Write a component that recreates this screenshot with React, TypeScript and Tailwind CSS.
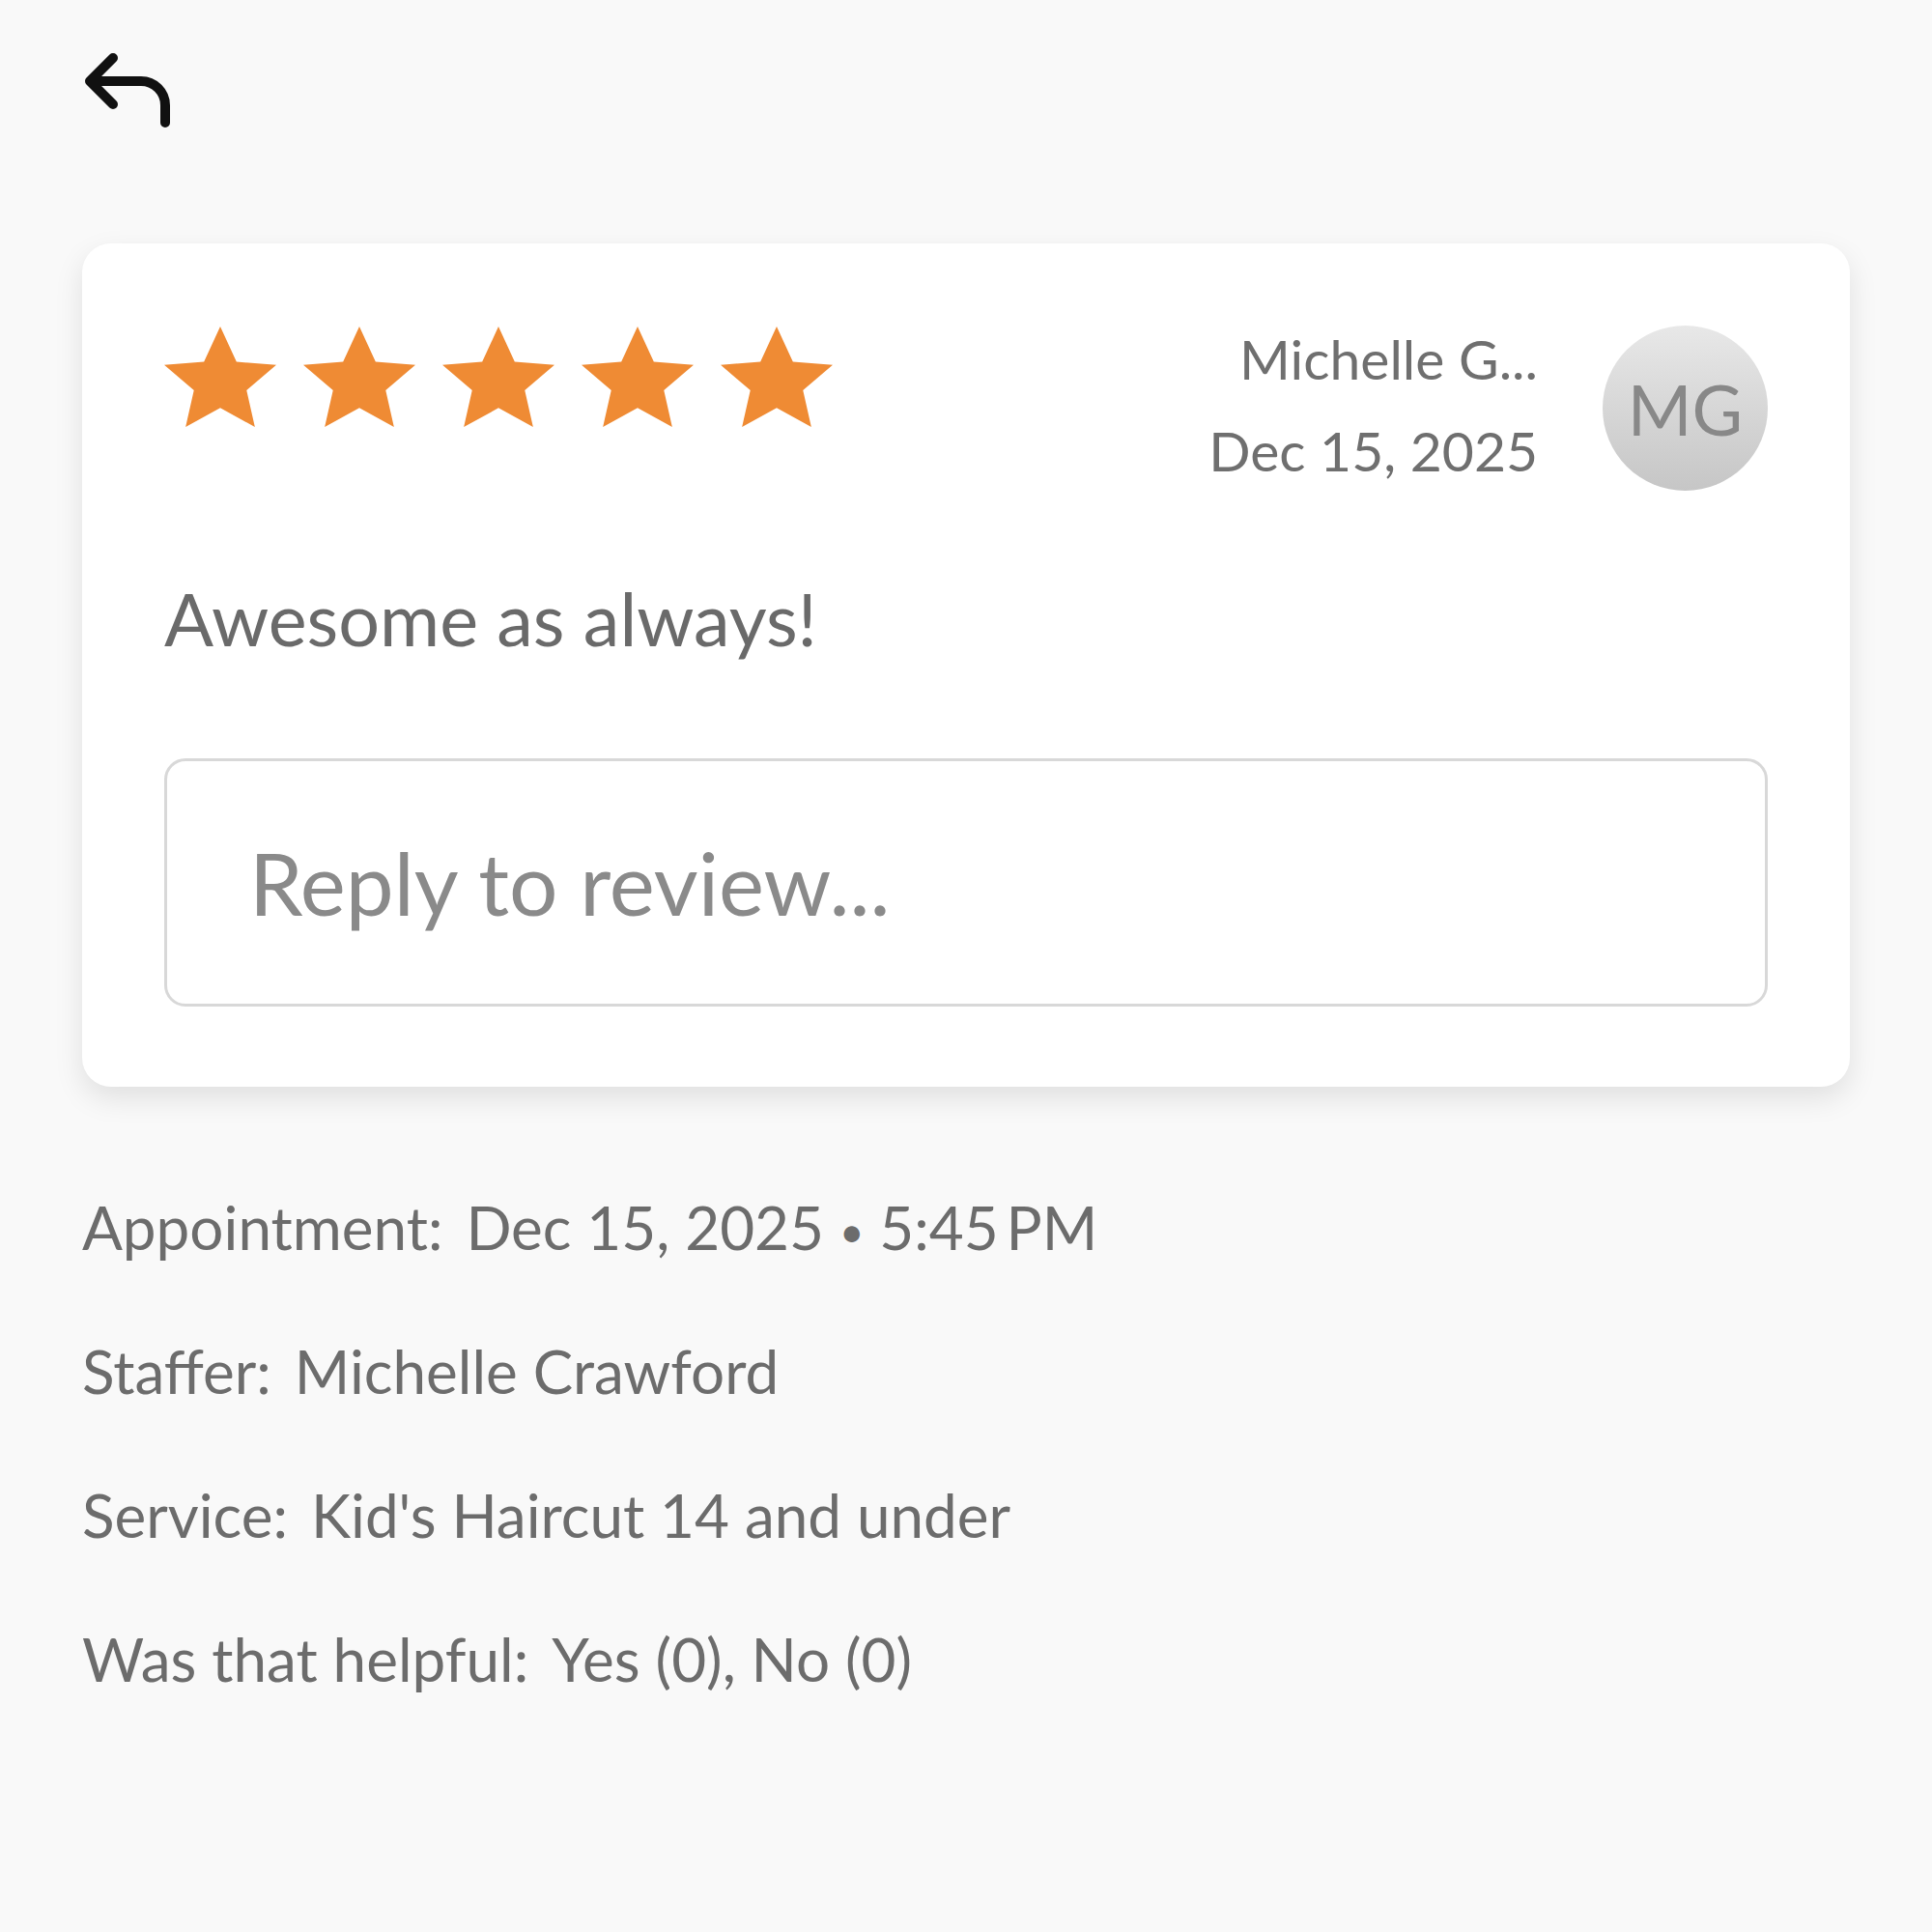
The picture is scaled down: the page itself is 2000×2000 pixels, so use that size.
const STAR_POINTS =
  "50,0 64.5,33.5 100,36.3 73.5,60.5 80.9,95.2 50,77.2 19.1,95.2 26.5,60.5 0,36.3 35.5,33.5";

function Star() {
  return (
    <svg
      width="116"
      height="104"
      viewBox="0 0 100 95.2"
      preserveAspectRatio="none"
      className="shrink-0"
    >
      <polygon points={STAR_POINTS} fill="#ef8b34" />
    </svg>
  );
}

function BackArrow() {
  return (
    <svg width="100" height="100" viewBox="25 10 100 100" fill="none">
      <path
        d="M57 30 L33 54 L57 78 M33 54 H86 A25 25 0 0 1 111 79 V97"
        stroke="#111111"
        strokeWidth="10"
        strokeLinecap="round"
        strokeLinejoin="round"
      />
    </svg>
  );
}

function InfoLine({ label, children }: { label: string; children: React.ReactNode }) {
  return (
    <div className="flex h-[74px] gap-[24px] text-[62px] leading-[74px] text-[#6c6c6c]">
      <span>{label}</span>
      <span>{children}</span>
    </div>
  );
}

export default function App() {
  return (
    <div className="min-h-screen bg-[#f9f9f9] px-[85px] pt-[40px] pb-[200px] font-['Lato','Noto_Sans',sans-serif]">
      <button className="block">
        <BackArrow />
      </button>

      <div className="mt-[112px] rounded-[30px] bg-white px-[85px] pt-[85px] pb-[83px] shadow-[0_12px_30px_rgba(0,0,0,0.10)]">
        <div className="flex items-start justify-between">
          <div className="flex gap-[28px] pt-px">
            <Star />
            <Star />
            <Star />
            <Star />
            <Star />
          </div>
          <div className="flex items-start gap-[67px]">
            <div className="flex flex-col items-end text-[57px] leading-[68px] text-[#6f6f6f]">
              <span>Michelle G...</span>
              <span className="mt-[27px]">Dec 15, 2025</span>
            </div>
            <div className="flex h-[171px] w-[171px] items-center justify-center rounded-full bg-gradient-to-b from-[#e8e8e8] to-[#c6c6c6] text-[72px] text-[#888888]">
              MG
            </div>
          </div>
        </div>

        <p className="mt-[87px] text-[75.5px] leading-[89px] text-[#6a6a6a]">
          Awesome as always!
        </p>

        <div className="mt-[101px] flex h-[257px] items-center rounded-[22px] border-[3px] border-[#d8d8d8] pl-[85px] text-[89px] text-[#8a8a8a]">
          Reply to review...
        </div>
      </div>

      <div className="mt-[108px] flex flex-col gap-[75px]">
        <InfoLine label="Appointment:">
          Dec 15, 2025 <span className="text-[44px] leading-none align-[3px]">{"\u2022"}</span> 5:45{"\u2009"}PM
        </InfoLine>
        <InfoLine label="Staffer:">Michelle Crawford</InfoLine>
        <InfoLine label="Service:">Kid's Haircut 14 and under</InfoLine>
        <InfoLine label="Was that helpful:">Yes (0), No (0)</InfoLine>
      </div>
    </div>
  );
}
